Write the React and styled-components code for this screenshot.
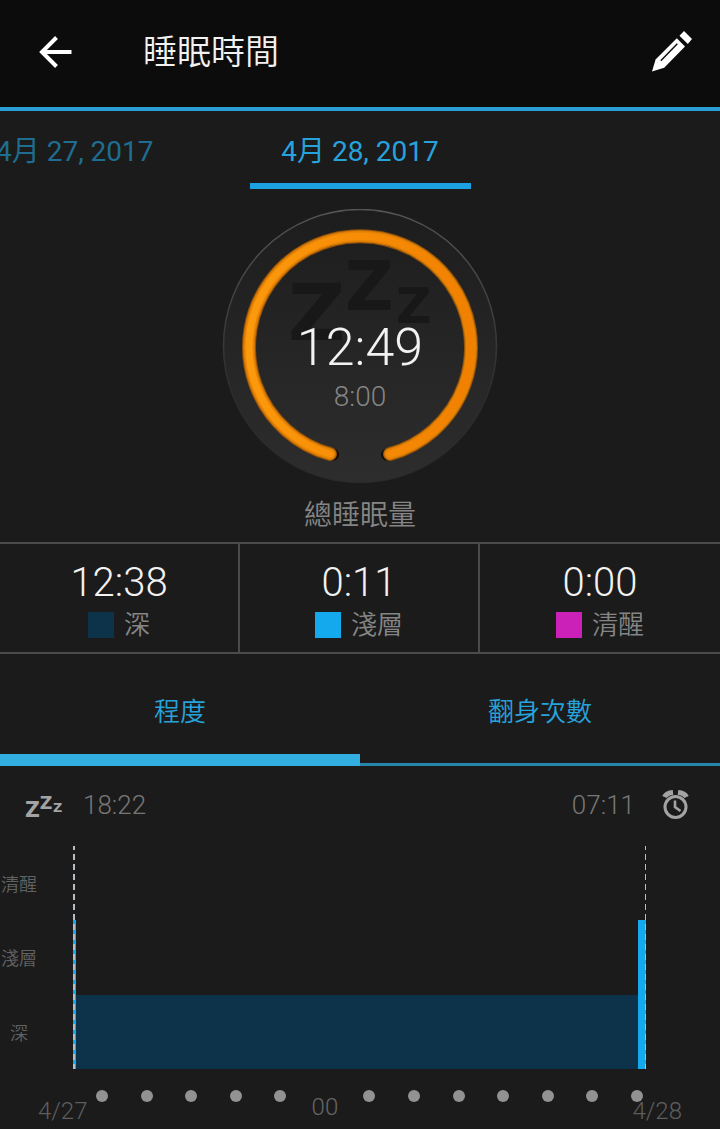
import { useState } from "react";
import styled, { createGlobalStyle } from "styled-components";

const GlobalStyle = createGlobalStyle`
* {
    box-sizing: border-box;
}
body {
    margin: 0;
    background: #1b1b1b;
    color: #f2f2f2;
    font-family: Roboto, "Noto Sans CJK TC", sans-serif;
    font-weight: 300;
}
button {
    margin: 0;
    padding: 0;
    border: 0;
    background: none;
    color: inherit;
    font: inherit;
    cursor: pointer;
}
h1, h2, p {
    margin: 0;
    font-weight: 350;
}
svg {
    display: block;
}
`

const Header = styled.header`
display: flex;
align-items: center;
height: 111px;
padding: 0 28px 4px 39px;
background: #0c0c0c;
border-bottom: 4px solid #2a9fd6;
h1 {
    flex: 1;
    margin-left: 71px;
    font-size: 34px;
    line-height: 40px;
}
`

const Dates = styled.nav`
display: grid;
grid-template-columns: 1fr 221px 1fr;
height: 78px;
overflow: hidden;
`

const DateTab = styled.button`
justify-self: ${({ $active }) => ($active ? "stretch" : "start")};
margin-left: ${({ $active }) => ($active ? "0" : "-4px")};
padding-top: 3px;
border-bottom: 6px solid ${({ $active }) => ($active ? "#1ba1e2" : "transparent")};
color: ${({ $active }) => ($active ? "#27a3dc" : "#1f6d90")};
font-size: 28px;
font-weight: 400;
white-space: nowrap;
`

const Summary = styled.section`
display: flex;
flex-direction: column;
align-items: center;
padding-top: 20px;
height: 353px;
h2 {
    margin-top: 11px;
    color: #858585;
    font-size: 28px;
    line-height: 40px;
}
`

const Gauge = styled.div`
display: grid;
justify-items: center;
> * {
    grid-area: 1 / 1;
}
`

const GaugeText = styled.div`
padding-top: 105px;
text-align: center;
strong {
    display: block;
    font-size: 52px;
    font-weight: 300;
    line-height: 68px;
}
span {
    display: block;
    color: #858585;
    font-size: 28px;
    line-height: 30px;
}
`

const Stats = styled.section`
display: grid;
grid-template-columns: repeat(3, 1fr);
border-top: 2px solid #4b4b4b;
border-bottom: 2px solid #4b4b4b;
`

const Stat = styled.div`
display: flex;
flex-direction: column;
align-items: center;
height: 108px;
padding-top: 17px;
&:not(:last-child) {
    border-right: 2px solid #4b4b4b;
}
strong {
    font-size: 40px;
    font-weight: 300;
    line-height: 44px;
}
`

const Legend = styled.p`
display: flex;
align-items: center;
gap: 10px;
margin-top: 3px;
color: #858585;
font-size: 26px;
line-height: 34px;
&::before {
    content: "";
    width: 26px;
    height: 26px;
    background: ${({ $color }) => $color};
}
`

const Tabs = styled.nav`
display: grid;
grid-template-columns: 1fr 1fr;
height: 112px;
box-shadow: inset 0 -3px #2686ac;
`

const Tab = styled.button`
border-top: 10px solid transparent;
border-bottom: 12px solid ${({ $active }) => ($active ? "#33aee0" : "transparent")};
color: #27a3dc;
font-size: 26px;
font-weight: 350;
`

const Times = styled.div`
display: flex;
align-items: center;
justify-content: space-between;
height: 80px;
padding: 0 31px 2px 25px;
color: #777;
font-size: 26px;
div {
    display: flex;
    align-items: center;
    gap: 20px;
}
div:last-child {
    gap: 27px;
}
`

const Chart = styled.div`
display: grid;
grid-template-columns: 73px 1fr 74px;
height: 223px;
`

const Levels = styled.div`
display: grid;
grid-template-rows: repeat(3, 1fr);
align-items: center;
width: 38px;
color: #626262;
font-size: 18px;
font-weight: 350;
text-align: center;
`

// dashed lines mark when the sleep began and ended
const Plot = styled.div`
display: flex;
align-items: flex-end;
position: relative;
&::before, &::after {
    content: "";
    position: absolute;
    top: 0;
    bottom: 0;
    left: 0;
    width: 2px;
    background: repeating-linear-gradient(transparent 0 4px, #b4c0c6 4px 10px) 0 4px / 2px 10px;
}
&::after {
    left: auto;
    right: 0;
    width: 1px;
}
`

const Segment = styled.div`
flex: ${({ $span }) => $span} 1 0;
height: ${({ $level }) => ($level * 100) / 3}%;
background: ${({ $color }) => $color};
`

const Hours = styled.div`
display: flex;
justify-content: space-between;
height: 30px;
padding: 21px 77px 0 96px;
color: #666;
font-size: 24px;
line-height: 34px;
`

const Dot = styled.i`
width: 12px;
height: 12px;
border-radius: 50%;
background: #929292;
`

const Hour = styled.span`
display: flex;
justify-content: center;
width: 12px;
`

const Days = styled.div`
display: flex;
justify-content: space-between;
padding: 0 38px;
color: #5e5e5e;
font-size: 24px;
line-height: 24px;
`

const colors = { deep: "#0d334b", light: "#14a8ec", awake: "#cb21b8" }

const stats = [
    { time: "12:38", label: "深", color: colors.deep },
    { time: "0:11", label: "淺層", color: colors.light },
    { time: "0:00", label: "清醒", color: colors.awake },
]

const segments = [
    { span: 3, level: 2, color: colors.light },
    { span: 562, level: 1, color: colors.deep },
    { span: 8, level: 2, color: colors.light },
]

function Snore({ width, color, ...rest }) {
    return (
        <svg width={width} viewBox="0 -20 146 104" fill={color} fontFamily="DejaVu Sans" fontWeight="700" aria-hidden="true" {...rest}>
            <text x="0" y="79" fontSize="79">Z</text>
            <text x="57" y="49" fontSize="67">Z</text>
            <text x="108" y="62" fontSize="49">Z</text>
        </svg>
    )
}

function BackIcon() {
    return (
        <svg width="33" height="32" viewBox="0 0 33 32" fill="none" stroke="#fff" strokeWidth="4">
            <path d="M17.500 1.500 3 16l14.500 14.500M3 16h29.500" />
        </svg>
    )
}

function PencilIcon() {
    return (
        <svg width="40" height="41" viewBox="0 0 40 41" fill="#fff">
            <path d="M0 40.500 3.600 28.500 24.800 7.300 33 15.500 12.200 36.700z" />
            <path d="M27.500 4.800 32 0 40 8 35.800 12.900z" />
            <path d="M8.800 29.800 25.300 12.800" stroke="#0c0c0c" strokeWidth="1.400" />
        </svg>
    )
}

function AlarmIcon() {
    return (
        <svg width="27" height="30" viewBox="0 0 27 30" fill="none" stroke="#a3a3a3">
            <circle cx="13.500" cy="17" r="10.500" strokeWidth="3" />
            <path d="M13 10.500V17l5.500 4" strokeWidth="2.600" />
            <path d="M2.500 7Q4.500 3 11 2.500M24.500 7Q22.500 3 16 2.500" strokeWidth="5" />
        </svg>
    )
}

function Ring() {
    return (
        <svg width="276" height="276" viewBox="0 0 276 276" fill="none" aria-hidden="true">
            <defs>
                <linearGradient id="face" x2="0" y2="1">
                    <stop offset="0" stopColor="#1d1d1d" />
                    <stop offset="1" stopColor="#2d2d2d" />
                </linearGradient>
                <linearGradient id="edge" x2="0" y2="1">
                    <stop offset="0" stopColor="#555" />
                    <stop offset=".7" stopColor="#2b2b2b" />
                </linearGradient>
                <linearGradient id="orange" x2="1" y2="0">
                    <stop offset="0" stopColor="#fc990c" />
                    <stop offset="1" stopColor="#f28000" />
                </linearGradient>
            </defs>
            <circle cx="138" cy="137" r="136.500" fill="url(#face)" stroke="url(#edge)" strokeWidth="1.500" />
            <path d="M111 245.500A111 111 0 1 1 165 245.500" stroke="#100c06" strokeWidth="12" strokeLinecap="round" />
            <path d="M108 245A111 111 0 1 1 168 245" stroke="#8f500a" strokeWidth="14" strokeLinecap="round" />
            <path d="M108 245A111 111 0 1 1 168 245" stroke="#cf7406" strokeWidth="12" strokeLinecap="round" />
            <path d="M108 245A111 111 0 1 1 168 245" stroke="#e88505" strokeWidth="10" strokeLinecap="round" />
            <path d="M108 245A111 111 0 1 1 168 245" stroke="url(#orange)" strokeWidth="7" strokeLinecap="round" />
            <Snore width="146" height="104" x="66" y="32" color="#181818" />
        </svg>
    )
}

function App() {
    const [tab, setTab] = useState("程度")

    return (
        <>
            <GlobalStyle />
            <Header>
                <button aria-label="返回"><BackIcon /></button>
                <h1>睡眠時間</h1>
                <button aria-label="編輯"><PencilIcon /></button>
            </Header>
            <Dates>
                <DateTab>4月 27, 2017</DateTab>
                <DateTab $active>4月 28, 2017</DateTab>
            </Dates>
            <Summary>
                <Gauge>
                    <Ring />
                    <GaugeText>
                        <strong>12:49</strong>
                        <span>8:00</span>
                    </GaugeText>
                </Gauge>
                <h2>總睡眠量</h2>
            </Summary>
            <Stats>
                {stats.map((stat) => (
                    <Stat key={stat.label}>
                        <strong>{stat.time}</strong>
                        <Legend $color={stat.color}>{stat.label}</Legend>
                    </Stat>
                ))}
            </Stats>
            <Tabs>
                {["程度", "翻身次數"].map((name) => (
                    <Tab key={name} $active={tab === name} onClick={() => setTab(name)}>{name}</Tab>
                ))}
            </Tabs>
            <Times>
                <div><Snore width="38" color="#a3a3a3" /> <span>18:22</span></div>
                <div><span>07:11</span> <AlarmIcon /></div>
            </Times>
            <Chart>
                <Levels>
                    <span>清醒</span>
                    <span>淺層</span>
                    <span>深</span>
                </Levels>
                <Plot>
                    {segments.map((segment, index) => (
                        <Segment key={index} $span={segment.span} $level={segment.level} $color={segment.color} />
                    ))}
                </Plot>
            </Chart>
            <Hours>
                {[...Array(13)].map((_, index) => (
                    index === 5 ? <Hour key={index}>00</Hour> : <Dot key={index} />
                ))}
            </Hours>
            <Days>
                <span>4/27</span>
                <span>4/28</span>
            </Days>
        </>
    )
}

export default App;
